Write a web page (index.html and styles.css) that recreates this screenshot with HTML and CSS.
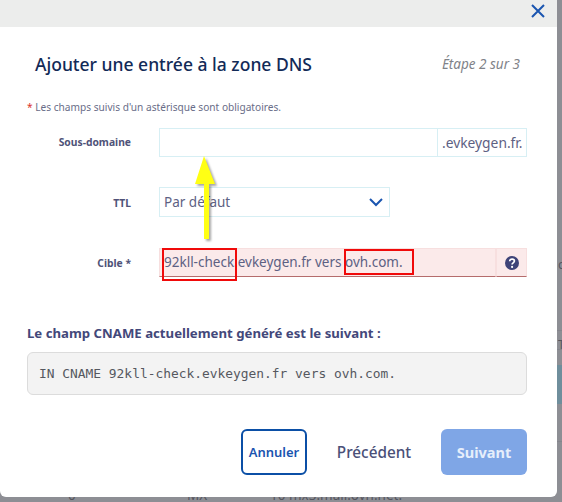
FILE: index.html
```html
<!DOCTYPE html>
<html lang="fr">
<head>
<meta charset="utf-8">
<title>Ajouter une entrée à la zone DNS</title>
<link rel="stylesheet" href="styles.css">
</head>
<body>
<div class="backdrop">
  <div class="behind-row"><span class="b0">0</span><span class="b1">MX</span><span class="b2">10 mx3.mail.ovh.net.</span></div>
  <span class="behind-c">c</span>
  <span class="behind-t">T</span>
  <div class="behind-line line-a"></div>
  <div class="behind-line line-b"></div>
  <div class="behind-band"></div>
  <div class="behind-line line-c"></div>
</div>
<main class="modal">
  <header class="modal-top">
    <svg class="close" viewBox="0 0 14 14" width="14" height="14"><path d="M1 1l12 12M13 1L1 13" fill="none" stroke="#1a55b0" stroke-width="2"/></svg>
  </header>
  <section class="modal-body">
    <div class="title-row">
      <h1 class="title">Ajouter une entrée à la zone DNS</h1>
      <span class="step">Étape 2 sur 3</span>
    </div>
    <p class="note"><span class="star">*</span> Les champs suivis d'un astérisque sont obligatoires.</p>
    <div class="form">
      <label class="label label-up">Sous-domaine</label>
      <div class="control">
        <div class="field field-main"></div>
        <div class="field addon">.evkeygen.fr.</div>
      </div>
      <label class="label">TTL</label>
      <div class="control control-ttl">
        <div class="field select">
          <span>Par défaut</span>
          <svg class="chev" viewBox="0 0 14 9" width="14" height="9"><path d="M1 1l6 6 6-6" fill="none" stroke="#1a55b0" stroke-width="2"/></svg>
        </div>
      </div>
      <label class="label">Cible *</label>
      <div class="control">
        <div class="field field-main error">92kll-check.evkeygen.fr vers ovh.com.</div>
        <div class="field help error">
          <svg viewBox="0 0 14 14" width="14" height="14"><circle cx="7" cy="7" r="7" fill="#3f4478"/><path d="M4.700 5.300c0-1.400 1.100-2.200 2.400-2.200s2.300.8 2.300 2c0 1.800-2.300 1.700-2.300 3.300" fill="none" stroke="#fff" stroke-width="1.700"/><circle cx="7.100" cy="10.900" r="1.100" fill="#fff"/></svg>
        </div>
      </div>
    </div>
    <h2 class="gen-title">Le champ CNAME actuellement généré est le suivant :</h2>
    <pre class="code">IN CNAME 92kll-check.evkeygen.fr vers ovh.com.</pre>
    <div class="actions">
      <button class="btn btn-outline">Annuler</button>
      <button class="btn btn-text">Précédent</button>
      <button class="btn btn-primary">Suivant</button>
    </div>
  </section>
</main>
<div class="mark mark-a"></div>
<div class="mark mark-b"></div>
<svg class="arrow" viewBox="0 0 30 90" width="30" height="90"><path d="M9 0L0 28h9v55h5V28h6z" fill="#ffff14"/></svg>
</body>
</html>
```
FILE: styles.css
```css
* { box-sizing: border-box; }
html, body { margin: 0; height: 100%; }
body {
  position: relative;
  width: 562px;
  height: 502px;
  overflow: hidden;
  background: #8d8e94;
  font-family: "Noto Sans", sans-serif;
  color: #5d6183;
}
.backdrop { position: absolute; inset: 0; color: #55565f; }
.behind-row { position: absolute; left: 0; top: 486px; font-size: 13.500px; line-height: 18px; }
.behind-row span { position: absolute; top: 0; white-space: nowrap; }
.b0 { left: 68px; }
.b1 { left: 187px; }
.b2 { left: 270px; }
.behind-c { position: absolute; left: 558px; top: 255px; font-size: 13px; line-height: 18px; }
.behind-t { position: absolute; left: 558px; top: 336px; font-size: 12px; line-height: 18px; }
.behind-line { position: absolute; left: 557px; right: 0; height: 1px; background: #84858c; }
.line-a { top: 330px; }
.line-b { top: 349px; }
.line-c { top: 441px; }
.behind-band { position: absolute; left: 557px; right: 0; top: 365px; height: 39px; background: #6f8e9c; }
.modal {
  position: relative;
  width: 557px;
  height: 497px;
  background: #fff;
  border-radius: 0 0 6px 6px;
  display: flex;
  flex-direction: column;
}
.modal-top {
  height: 27px;
  flex: none;
  background: #ecedec;
  display: flex;
  justify-content: flex-end;
  align-items: center;
  padding: 0 12px 5px 0;
}
.modal-body { padding: 0 30px 0 27px; flex: 1; }
.title-row {
  display: flex;
  justify-content: space-between;
  align-items: center;
  margin-top: 24px;
  padding: 0 7px 0 8px;
}
.title { margin: 0; font-size: 17.500px; line-height: 26px; font-weight: 500; color: #122a57; }
.step { font-size: 13.500px; font-style: italic; color: #808288; }
.note { margin: 23px 0 0; font-size: 10.150px; line-height: 14px; color: #696d88; }
.star { color: #d9342b; }
.form {
  display: grid;
  grid-template-columns: 104px 368px;
  column-gap: 28px;
  row-gap: 30px;
  margin-top: 14px;
  align-items: center;
}
.label { font-size: 10.300px; font-weight: 700; text-align: right; color: #4f5378; }
.label-up { margin-top: -2px; }
.control { display: flex; height: 29px; }
.control-ttl { height: 31px; }
.field {
  height: 100%;
  border: 1px solid #d7eff4;
  font-size: 13.500px;
  line-height: 27px;
  padding: 0 4px;
  white-space: nowrap;
}
.field-main { flex: 1; }
.addon { width: 90px; margin-left: -1px; font-size: 13.800px; }
.select {
  width: 231px;
  height: 30px;
  display: flex;
  justify-content: space-between;
  align-items: center;
  padding-right: 6px;
}
.error { background: #fbeaea; border-color: #f7dfdf; border-bottom-color: #b56c6c; }
.help { width: 31px; display: flex; align-items: center; justify-content: center; }
.gen-title { margin: 47px 0 0; font-size: 13.200px; line-height: 18px; font-weight: 700; color: #43487a; }
.code {
  margin: 10px 0 0;
  height: 43px;
  border: 1px solid #dcdcdc;
  border-radius: 6px;
  background: #f3f3f3;
  padding: 0 11px;
  font-family: "DejaVu Sans Mono", monospace;
  font-size: 12.900px;
  line-height: 41px;
  color: #55585f;
}
.actions { display: flex; justify-content: flex-end; align-items: stretch; margin-top: 34px; height: 46px; }
.btn { font-family: inherit; font-weight: 500; border-radius: 6px; font-size: 15.300px; padding: 0; cursor: pointer; }
.btn-outline { width: 66px; background: #fff; border: 2px solid #0b4fa6; color: #1a55b0; font-size: 13px; font-weight: 600; }
.btn-text { width: 134px; background: none; border: 0; color: #4a5078; }
.btn-primary { width: 86px; background: #7fa6e6; border: 0; color: #e6eefb; font-weight: 700; font-size: 14.500px; }
.mark { position: absolute; border: 2px solid #f00a0a; }
.mark-a { left: 162px; top: 248px; width: 75px; height: 33px; }
.mark-b { left: 344px; top: 249px; width: 70px; height: 26px; }
.arrow { position: absolute; left: 195px; top: 156px; filter: drop-shadow(2px 2px 1px rgba(0,0,0,.35)); }
```
